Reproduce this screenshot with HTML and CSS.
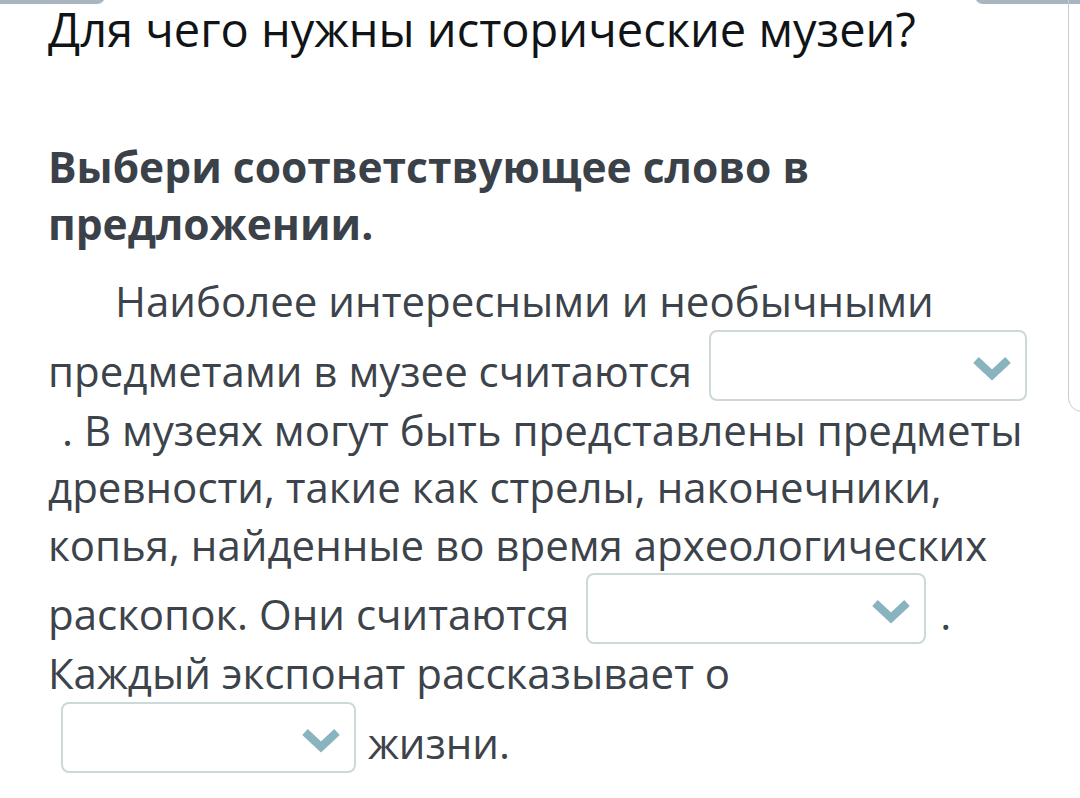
FILE: index.html
```html
<!DOCTYPE html>
<html lang="ru">
<head>
<meta charset="utf-8">
<link rel="stylesheet" href="styles.css">
</head>
<body>
<div class="tab tab-left"></div>
<div class="tab tab-right"></div>
<div class="side-card"></div>
<main class="task">
  <h1 class="title">Для чего нужны исторические музеи?</h1>
  <h2 class="prompt">Выбери соответствующее слово в предложении.</h2>
  <p class="text">Наиболее интересными и необычными предметами в музее считаются <span class="select select-1"><svg class="chev" viewBox="0 0 40 26"><path d="M4 4 L20 19 L36 4" fill="none" stroke="#88b3bf" stroke-width="8"/></svg></span> <span class="lead">. В</span> музеях могут быть представлены предметы древности, такие как стрелы, наконечники, копья, найденные во время археологических раскопок. Они считаются <span class="select select-2"><svg class="chev" viewBox="0 0 40 26"><path d="M4 4 L20 19 L36 4" fill="none" stroke="#88b3bf" stroke-width="8"/></svg></span> . Каждый экспонат рассказывает о <span class="select select-3"><svg class="chev" viewBox="0 0 40 26"><path d="M4 4 L20 19 L36 4" fill="none" stroke="#88b3bf" stroke-width="8"/></svg></span> жизни.</p>
</main>
</body>
</html>
```
FILE: styles.css
```css
html, body {
  margin: 0;
  padding: 0;
  background: #ffffff;
  overflow: hidden;
}
body {
  width: 1080px;
  height: 798px;
  position: relative;
  font-family: "Open Sans", "Noto Sans", sans-serif;
}
.tab {
  position: absolute;
  top: -12px;
  height: 16px;
  background: #a9b5be;
  border-radius: 12px;
}
.tab-left { left: -20px; width: 125px; }
.tab-right { left: 975px; width: 120px; }
.side-card {
  position: absolute;
  left: 1068px;
  top: -30px;
  width: 60px;
  height: 442px;
  border: 1.5px solid #c8ccd0;
  border-radius: 14px;
  box-sizing: border-box;
}
.task {
  padding: 0 40px 0 48px;
}
.title {
  margin: 0;
  padding-top: 1px;
  font-weight: 400;
  font-size: 47px;
  line-height: 56px;
  color: #111416;
}
.prompt {
  margin: 81px 0 0;
  font-weight: 700;
  font-size: 42.5px;
  line-height: 57px;
  color: #3b4148;
}
.text {
  margin: 20px 0 0;
  font-size: 42px;
  line-height: 57.5px;
  text-indent: 67px;
  color: #3d434a;
}
.lead {
  margin-left: 14px;
}
.select {
  display: inline-block;
  position: relative;
  width: 318px;
  height: 71px;
  margin: 0 3px 0 6px;
  box-sizing: border-box;
  border: 2px solid #cdd8d8;
  border-radius: 8px;
  vertical-align: -14px;
  text-indent: 0;
}
.select-2 { width: 340px; }
.select-3 { width: 295px; margin-left: 13px; margin-right: 1px; }
.chev {
  position: absolute;
  right: 13px;
  top: 24px;
  width: 40px;
  height: 26px;
}
```
